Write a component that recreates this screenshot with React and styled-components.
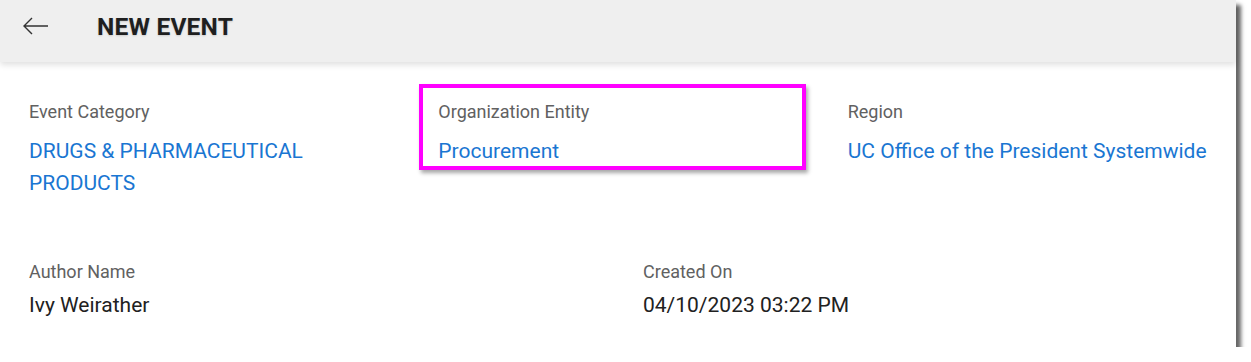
import styled, { createGlobalStyle } from "styled-components";

const GlobalStyle = createGlobalStyle`
  body {
    margin: 0;
    background: #ffffff;
    font-family: Roboto, "Noto Sans", Arial, sans-serif;
  }
`;

const Card = styled.div`
  width: 1236px;
  height: 347px;
  background: #ffffff;
  box-shadow: 5px 5px 4px rgba(0, 0, 0, 0.6);
  display: flex;
  flex-direction: column;
`;

const Header = styled.div`
  height: 62px;
  box-sizing: border-box;
  flex-shrink: 0;
  background: #efefef;
  display: flex;
  align-items: center;
  padding: 0 0 10px 23px;
  gap: 48px;
  box-shadow: 0 3px 6px rgba(0, 0, 0, 0.12);
  position: relative;
`;

const BackButton = styled.button`
  border: 0;
  background: none;
  padding: 0;
  width: 26px;
  height: 20px;
  display: flex;
  align-items: center;
  cursor: pointer;
`;

const Title = styled.h1`
  margin: 0;
  font-size: 24.5px;
  font-weight: 700;
  color: #1f1f1f;
  letter-spacing: 0.2px;
  text-shadow: 0 1px 2px rgba(0, 0, 0, 0.15);
`;

const Body = styled.div`
  padding: 38px 0 0 8px;
  display: flex;
  flex-direction: column;
  gap: 61px;
`;

const Row = styled.div`
  display: grid;
  grid-template-columns: repeat(${({ $cols }) => $cols}, 1fr);
`;

const Field = styled.div`
  position: relative;
  padding-left: 21px;
  display: flex;
  flex-direction: column;
  gap: ${({ $gap }) => $gap}px;
`;

const Label = styled.div`
  font-size: 18px;
  line-height: 24px;
  color: #616161;
`;

const Value = styled.div`
  font-size: 21px;
  line-height: 32px;
  color: ${({ $link }) => ($link ? "#1a76d2" : "#212121")};
  max-width: ${({ $wide }) => ($wide ? "none" : "300px")};
`;

const Highlight = styled.div`
  position: absolute;
  left: 2px;
  top: -16px;
  width: 379px;
  height: 78px;
  border: 4px solid #ff00ff;
  box-shadow: 2px 3px 4px rgba(0, 0, 0, 0.35);
  pointer-events: none;
`;

const ArrowIcon = () => (
  <svg width="26" height="18" viewBox="0 0 26 18" fill="none">
    <path d="M1 9H25M9 1L1 9L9 17" stroke="#333" strokeWidth="1.4" />
  </svg>
);

export default function App() {
  return (
    <>
      <GlobalStyle />
      <Card>
        <Header>
          <BackButton aria-label="Back">
            <ArrowIcon />
          </BackButton>
          <Title>NEW EVENT</Title>
        </Header>
        <Body>
          <Row $cols={3}>
            <Field $gap={11}>
              <Label>Event Category</Label>
              <Value $link>DRUGS &amp; PHARMACEUTICAL PRODUCTS</Value>
            </Field>
            <Field $gap={11}>
              <Highlight />
              <Label>Organization Entity</Label>
              <Value $link>Procurement</Value>
            </Field>
            <Field $gap={11}>
              <Label>Region</Label>
              <Value $link $wide>
                UC Office of the President Systemwide
              </Value>
            </Field>
          </Row>
          <Row $cols={2}>
            <Field $gap={5}>
              <Label>Author Name</Label>
              <Value>Ivy Weirather</Value>
            </Field>
            <Field $gap={5}>
              <Label>Created On</Label>
              <Value>04/10/2023 03:22 PM</Value>
            </Field>
          </Row>
        </Body>
      </Card>
    </>
  );
}
